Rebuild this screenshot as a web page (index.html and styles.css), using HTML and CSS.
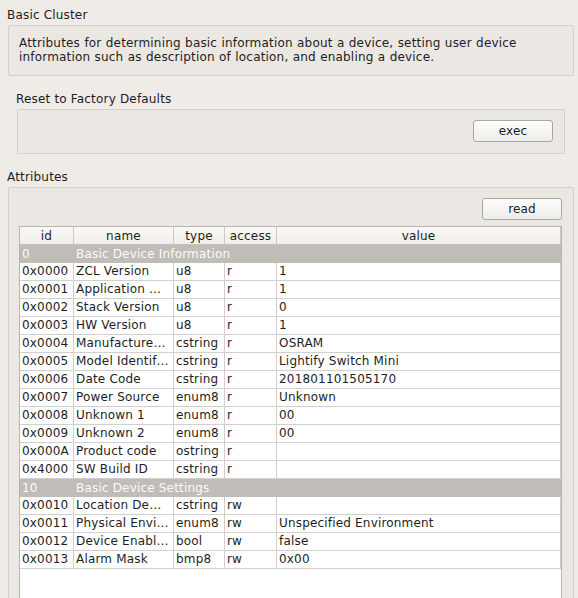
FILE: index.html
```html
<!DOCTYPE html>
<html>
<head>
<meta charset="utf-8">
<link rel="stylesheet" href="styles.css">
</head>
<body>
<div class="page">
  <div class="label">Basic Cluster</div>
  <div class="box desc">Attributes for determining basic information about a device, setting user device<br>information such as description of location, and enabling a device.</div>
  <div class="cmds">
    <div class="label">Reset to Factory Defaults</div>
    <div class="box cmd"><button class="btn">exec</button></div>
  </div>
  <div class="label attr-label">Attributes</div>
  <div class="box attrs">
    <div class="toolbar"><button class="btn">read</button></div>
    <div class="tablewrap">
      <table class="grid">
        <colgroup>
          <col class="c-id"><col class="c-name"><col class="c-type"><col class="c-access"><col class="c-value">
        </colgroup>
        <thead>
          <tr><th>id</th><th>name</th><th>type</th><th>access</th><th>value</th></tr>
        </thead>
        <tbody>
          <tr class="group"><td>0</td><td colspan="4">Basic Device Information</td></tr>
          <tr><td>0x0000</td><td>ZCL Version</td><td>u8</td><td>r</td><td>1</td></tr>
          <tr><td>0x0001</td><td>Application …</td><td>u8</td><td>r</td><td>1</td></tr>
          <tr><td>0x0002</td><td>Stack Version</td><td>u8</td><td>r</td><td>0</td></tr>
          <tr><td>0x0003</td><td>HW Version</td><td>u8</td><td>r</td><td>1</td></tr>
          <tr><td>0x0004</td><td>Manufacture…</td><td>cstring</td><td>r</td><td>OSRAM</td></tr>
          <tr><td>0x0005</td><td>Model Identif…</td><td>cstring</td><td>r</td><td>Lightify Switch Mini</td></tr>
          <tr><td>0x0006</td><td>Date Code</td><td>cstring</td><td>r</td><td>201801101505170</td></tr>
          <tr><td>0x0007</td><td>Power Source</td><td>enum8</td><td>r</td><td>Unknown</td></tr>
          <tr><td>0x0008</td><td>Unknown 1</td><td>enum8</td><td>r</td><td>00</td></tr>
          <tr><td>0x0009</td><td>Unknown 2</td><td>enum8</td><td>r</td><td>00</td></tr>
          <tr><td>0x000A</td><td>Product code</td><td>ostring</td><td>r</td><td></td></tr>
          <tr><td>0x4000</td><td>SW Build ID</td><td>cstring</td><td>r</td><td></td></tr>
          <tr class="group"><td>10</td><td colspan="4">Basic Device Settings</td></tr>
          <tr><td>0x0010</td><td>Location De…</td><td>cstring</td><td>rw</td><td></td></tr>
          <tr><td>0x0011</td><td>Physical Envi…</td><td>enum8</td><td>rw</td><td>Unspecified Environment</td></tr>
          <tr><td>0x0012</td><td>Device Enabl…</td><td>bool</td><td>rw</td><td>false</td></tr>
          <tr><td>0x0013</td><td>Alarm Mask</td><td>bmp8</td><td>rw</td><td>0x00</td></tr>
        </tbody>
      </table>
    </div>
  </div>
</div>
</body>
</html>
```
FILE: styles.css
```css
html, body {
  margin: 0;
  height: 598px;
  overflow: hidden;
}
body {
  background: #efebe7;
  font-family: "DejaVu Sans", "Liberation Sans", sans-serif;
  font-size: 12px;
  line-height: 14px;
  letter-spacing: 0.18px;
  color: #1e1e1e;
}
.page {
  padding: 8px 4px 0 8px;
}
.label {
  height: 14px;
  margin: 0 0 3px -1px;
  white-space: nowrap;
}
.box {
  border: 1px solid #d4d0cb;
  border-radius: 2px;
  background: #ebe8e3;
}
.desc {
  padding: 10px 10px 11px 10px;
  white-space: nowrap;
  word-spacing: 0.35px;
  color: #231d23;
}
.cmds {
  margin-top: 16px;
  padding: 0 9px;
}
.cmd {
  display: flex;
  justify-content: flex-end;
  padding: 10px 11px 11px 10px;
}
.attr-label {
  margin-top: 16px;
}
.btn {
  box-sizing: border-box;
  width: 80px;
  height: 22px;
  border: 1px solid #aaa6a2;
  border-radius: 3px;
  background: linear-gradient(#fdfdfd, #ededec);
  font-family: inherit;
  font-size: 12px;
  line-height: 14px;
  letter-spacing: 0.18px;
  color: #1e1e1e;
  padding: 0;
}
.attrs {
  padding: 10px 11px 0 10px;
}
.toolbar {
  display: flex;
  justify-content: flex-end;
  margin-bottom: 6px;
}
.tablewrap {
  box-sizing: border-box;
  height: 400px;
  border: 1px solid #b9b5b1;
  background: #ffffff;
}
.grid {
  table-layout: fixed;
  border-collapse: separate;
  border-spacing: 0;
  width: 541px;
}
.c-id { width: 54px; }
.c-name { width: 100px; }
.c-type { width: 51px; }
.c-access { width: 52px; }
.c-value { width: 284px; }
.grid th {
  box-sizing: border-box;
  height: 18px;
  padding: 1px 0 0 0;
  font-weight: normal;
  text-align: center;
  line-height: 16px;
  background: linear-gradient(#f9f8f6, #f1efec);
  border-right: 1px solid #cdc9c5;
  border-bottom: 1px solid #c6c2be;
  color: #1e1e1e;
  vertical-align: top;
}
.grid td {
  box-sizing: border-box;
  height: 18px;
  padding: 0 0 0 2px;
  line-height: 16px;
  vertical-align: top;
  border-right: 1px solid #d2cfcc;
  border-bottom: 1px solid #d2cfcc;
  white-space: nowrap;
  overflow: hidden;
  color: #1e1e1e;
}
.grid tr.group td {
  background: #c0bcb8;
  color: #fbfbfb;
  padding-top: 1px;
  border-right: none;
  border-bottom: 1px solid #c0bcb8;
}
```
